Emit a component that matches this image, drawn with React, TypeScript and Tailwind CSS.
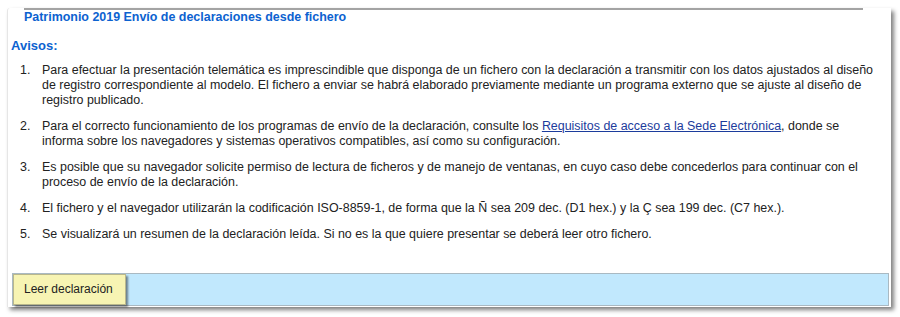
import React from 'react';

const avisos: React.ReactNode[] = [
    <>Para efectuar la presentación telemática es imprescindible que disponga de un fichero con la declaración a transmitir con los datos ajustados al diseño de registro correspondiente al modelo. El fichero a enviar se habrá elaborado previamente mediante un programa externo que se ajuste al diseño de registro publicado.</>,
    <>
        Para el correcto funcionamiento de los programas de envío de la declaración, consulte los{' '}
        <a href="#" className="text-[#1c3c9c] underline">Requisitos de acceso a la Sede Electrónica</a>, donde se informa sobre los navegadores y sistemas operativos compatibles, así como su configuración.
    </>,
    <>Es posible que su navegador solicite permiso de lectura de ficheros y de manejo de ventanas, en cuyo caso debe concederlos para continuar con el proceso de envío de la declaración.</>,
    <>El fichero y el navegador utilizarán la codificación ISO-8859-1, de forma que la Ñ sea 209 dec. (D1 hex.) y la Ç sea 199 dec. (C7 hex.).</>,
    <>Se visualizará un resumen de la declaración leída. Si no es la que quiere presentar se deberá leer otro fichero.</>,
];

const App: React.FC = () => {
    return (
        <div className="w-[900px] h-[317px] bg-white pt-[8px] pl-[7px] font-['Liberation_Sans',Arial,sans-serif] text-[12.45px] leading-[15px] text-[#222]">
            <div className="w-[884px] h-[299px] flex flex-col bg-white border-l border-[#e6e6e6] rounded-tl-[3px] shadow-[3px_3px_4px_rgba(0,0,0,0.5)]">
                {/* top rule */}
                <div className="h-[2px] bg-[#a3a3a3] ml-[16px] mr-[28px]"></div>

                {/* Header */}
                <h1 className="pl-[16px] font-bold text-[#0c62d0]">
                    Patrimonio 2019 Envío de declaraciones desde fichero
                </h1>
                <h2 className="mt-[13px] pl-[3px] font-bold text-[13px] text-[#0c62d0]">Avisos:</h2>

                {/* Notices */}
                <ol className="mt-[10px] pl-[12px] pr-[10px] flex flex-col gap-[11px]">
                    {avisos.map((item, i) => (
                        <li key={i} className="flex">
                            <span className="w-[22px] shrink-0">{i + 1}.</span>
                            <span>{item}</span>
                        </li>
                    ))}
                </ol>

                {/* Action bar */}
                <div className="mt-auto mb-[1px] ml-[4px] mr-[2px] h-[33px] bg-[#c1e8fd] border border-[#a9b9c2] flex items-stretch">
                    <button className="w-[113px] bg-[#f7f4b3] border border-[#b9b78c] shadow-[2px_2px_2px_rgba(0,0,0,0.45)] text-left pl-[10px] text-[12px] text-[#222]">
                        Leer declaración
                    </button>
                </div>
            </div>
        </div>
    );
};

export default App;
